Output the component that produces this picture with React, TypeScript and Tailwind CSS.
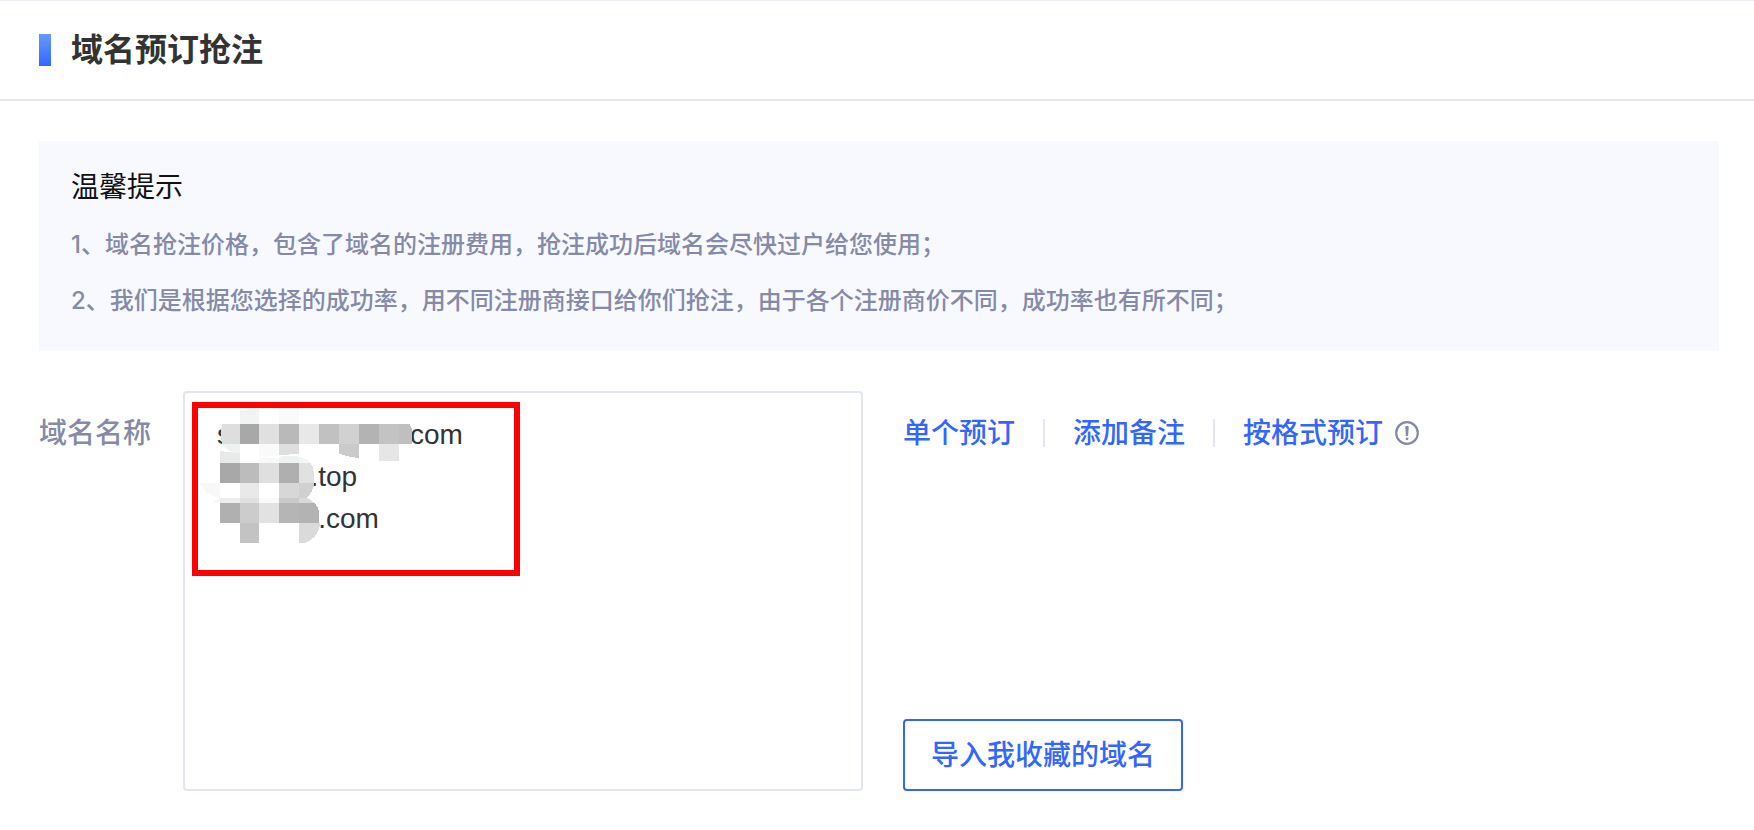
import { useState } from "react";

const tips = [
  "1、域名抢注价格，包含了域名的注册费用，抢注成功后域名会尽快过户给您使用；",
  "2、我们是根据您选择的成功率，用不同注册商接口给你们抢注，由于各个注册商价不同，成功率也有所不同；",
];

// The hidden part of each name is kept as blanks
const initialDomains = [
  "s" + " ".repeat(22) + ".com",
  " ".repeat(12) + ".top",
  " ".repeat(13) + ".com",
].join("\n");

function InfoIcon() {
  return (
    <svg viewBox="0 0 24 24" className="h-6 w-6" fill="none" aria-hidden="true">
      <circle cx="12" cy="12" r="10.8" stroke="#848aa8" strokeWidth="2.2" />
      <path d="M10.3 5.8q0-.8.8-.8h1.8q.8 0 .8.8l-.6 9.2h-2.2z" fill="#848aa8" />
      <circle cx="12" cy="17.8" r="1.4" fill="#848aa8" />
    </svg>
  );
}

function Mosaic() {
  return (
    <svg
      viewBox="9 33 1080 540"
      className="pointer-events-none absolute left-0 top-0 h-[180px] w-[360px]"
      shapeRendering="crispEdges"
      aria-hidden="true"
    >
      {/* first name */}
      <path d="M180 90l57-4v46h-57z" fill="#f2f4f4" />
      <path d="M297 84h60v48h-60z" fill="#fafafa" />
      <path d="M127 132h53v60h-53q-8-30 0-60z" fill="#dedede" />
      <path d="M180 132h57v60h-57z" fill="#a8a8a8" />
      <path d="M237 132h60v60h-60z" fill="#e0e0e0" />
      <path d="M297 132h60v60h-60z" fill="#b9b9b9" />
      <path d="M357 132h60v60h-60z" fill="#e8e8e8" />
      <path d="M417 132h60v60h-60z" fill="#c1c1c1" />
      <path d="M477 132h60v60h-60z" fill="#d1d1d1" />
      <path d="M537 132h60v60h-60z" fill="#b3b3b3" />
      <path d="M597 132h60v60h-60z" fill="#c3c3c3" />
      <path d="M657 132h32q8 12 8 30v30h-40z" fill="#bfbfbf" />
      <path d="M127 192h53v30q-36-4-53-30z" fill="#eff2f2" />
      <path d="M237 192h60v34l-60 6z" fill="#fafafa" />
      <path d="M297 192h60v29l-60 5z" fill="#dedede" />
      <path d="M477 192h60v42q-36-3-60-14z" fill="#cacaca" />
      <path d="M597 192h60v50h-60z" fill="#e6e6e6" />

      {/* second name */}
      <path d="M120 213l60 7v29h-60z" fill="#e8e9e9" />
      <path d="M237 234h60v15h-60z" fill="#f8f8f8" />
      <path d="M297 230q35-4 60 0v19h-60z" fill="#eff2f2" />
      <path d="M357 230q22 5 34 19h-34z" fill="#f4f5f5" />
      <path d="M120 249h60v60h-60z" fill="#a8a8a8" />
      <path d="M180 249h57v60h-57z" fill="#bcbcbc" />
      <path d="M237 249h60v60h-60z" fill="#dfdfdf" />
      <path d="M297 249h60v60h-60z" fill="#afafaf" />
      <path d="M357 249h34q14 20 12 60h-46z" fill="#e1e1e1" />
      <path d="M60 309h60v45q-44-9-60-45z" fill="#f8f8f8" />
      <path d="M180 309h57v45h-57z" fill="#e9e9e9" />
      <path d="M297 309h60v45h-60z" fill="#d7d7d7" />
      <path d="M357 309h46q-4 26-22 45h-24z" fill="#d0d0d0" />

      {/* third name */}
      <path d="M96 369q10-11 24-15v15z" fill="#f8f8f8" />
      <path d="M120 354h60v15h-60z" fill="#ededed" />
      <path d="M180 354h57v15h-57z" fill="#e0e0e0" />
      <path d="M237 354h60v15h-60z" fill="#fafafa" />
      <path d="M297 354h60v15h-60z" fill="#c9c9c9" />
      <path d="M357 354h26l20 15h-46z" fill="#d9d9d9" />
      <path d="M120 369h60v60h-60z" fill="#b0b0b0" />
      <path d="M180 369h57v60h-57z" fill="#cccccc" />
      <path d="M237 369h60v60h-60z" fill="#e2e2e2" />
      <path d="M297 369h60v60h-60z" fill="#b5b5b5" />
      <path d="M357 369h46q14 14 14 30v30h-60z" fill="#b3b3b3" />
      <path d="M180 429h57v60h-57z" fill="#c3c3c3" />
      <path d="M357 429h64q-6 46-48 60h-16z" fill="#dadada" />
    </svg>
  );
}

export default function App() {
  const [domains, setDomains] = useState(initialDomains);

  return (
    <div className="bg-white font-['Inter','Noto_Sans_CJK_SC',sans-serif] text-[28px] leading-[42px] text-[#333]">
      {/* Page title */}
      <header className="flex h-[101px] items-center gap-5 border-b-2 border-t border-b-[#e2e6f2] border-t-[#eef2fd] pl-[39px]">
        <span className="h-8 w-3 bg-linear-to-b from-[#6699ff] to-[#3366ff]" />
        <h1 className="text-[32px] font-bold leading-[48px]">域名预订抢注</h1>
      </header>

      <main className="pb-10 pl-[39px] pr-[35px] pt-10">
        {/* Tips */}
        <section className="bg-[#f8f9ff] px-8 pb-[22px] pt-[25px]">
          <h2 className="text-[#111]">温馨提示</h2>
          <div className="mt-[9px] text-2xl font-medium leading-[56px] text-[#848aa8]">
            {tips.map((tip) => (
              <p key={tip}>{tip}</p>
            ))}
          </div>
        </section>

        {/* Domain form */}
        <form className="mt-10 flex" onSubmit={(e) => e.preventDefault()}>
          <label htmlFor="domains" className="mr-8 shrink-0 pt-[21px] font-medium text-[#848aa8]">
            域名名称
          </label>

          <div className="relative w-[680px]">
            <textarea
              id="domains"
              value={domains}
              onChange={(e) => setDomains(e.target.value)}
              spellCheck={false}
              className="block h-[400px] w-full resize-none rounded border-2 border-[#e2e6f2] px-8 py-[21px] font-['Liberation_Sans','Noto_Sans_CJK_SC',sans-serif] outline-none"
            />
            <Mosaic />
            <div className="pointer-events-none absolute left-[9px] top-[11px] h-[174px] w-[328px] border-[6px] border-[#ff0000]" />
          </div>

          <div className="ml-10 flex shrink-0 flex-col items-start justify-between pt-[21px] font-medium text-[#3366ff]">
            <div className="flex items-center">
              <a href="#single">单个预订</a>
              <span className="mx-7 h-7 w-[2px] bg-[#e2e6f2]" />
              <a href="#remark">添加备注</a>
              <span className="mx-7 h-7 w-[2px] bg-[#e2e6f2]" />
              <a href="#format">按格式预订</a>
              <button type="button" aria-label="格式说明" className="ml-3">
                <InfoIcon />
              </button>
            </div>
            <button type="button" className="h-[72px] rounded border-2 border-[#3366ff] px-[26px]">
              导入我收藏的域名
            </button>
          </div>
        </form>
      </main>
    </div>
  );
}
